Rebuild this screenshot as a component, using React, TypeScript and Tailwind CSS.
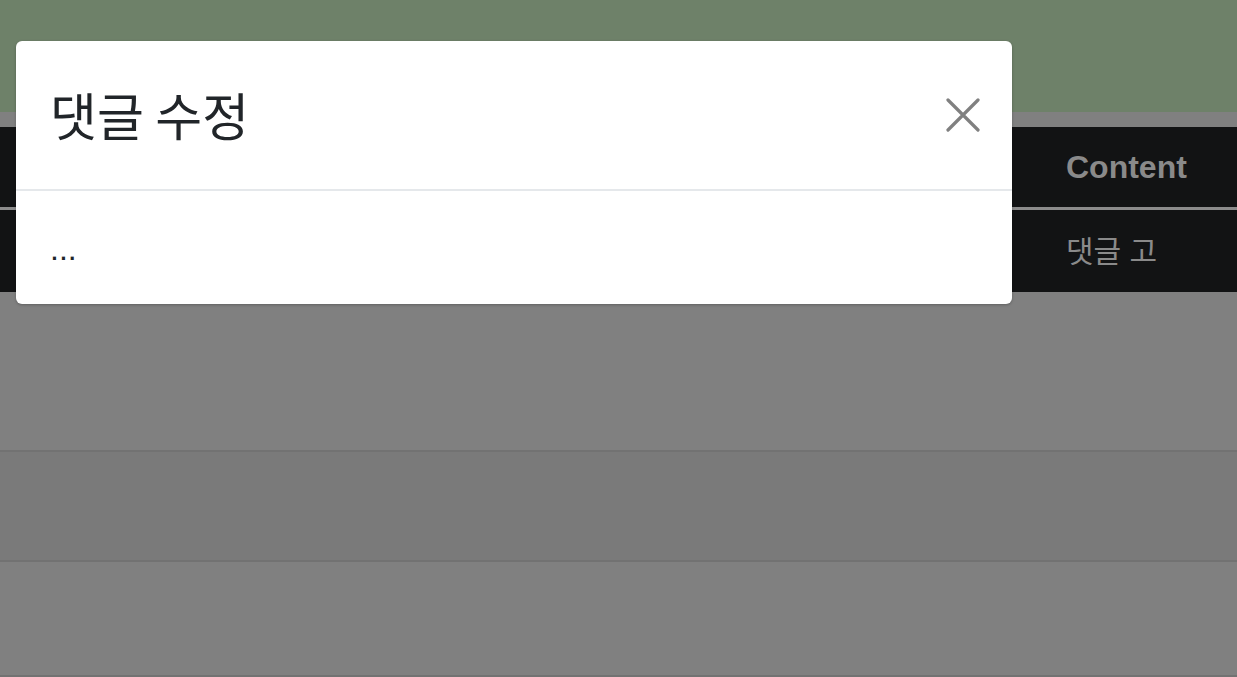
const FONT = "font-['Liberation_Sans','Noto_Sans_CJK_KR',sans-serif]";

export default function App() {
  return (
    <div className={`relative h-[677px] w-full overflow-hidden bg-[#808080] ${FONT}`}>
      {/* page behind the backdrop */}
      <div className="h-[112px] bg-[#6e8169]" />
      <div className="mt-[15px]">
        <div className="flex h-[80px] items-center bg-[#121314]">
          <div className="w-[1040px] shrink-0" />
          <div className="px-[26px] text-[32px] font-bold text-[#8a8a8a]">Content</div>
        </div>
        <div className="h-[3px] bg-[#8c8c8c]" />
        <div className="flex h-[82px] items-center bg-[#121314]">
          <div className="w-[1040px] shrink-0" />
          <div className="px-[26px] text-[30px] text-[#8a8a8a]">댓글 고</div>
        </div>
        <div className="h-[160px] border-b-2 border-[#727272]" />
        <div className="h-[110px] border-b-2 border-[#727272] bg-[#7a7a7a]" />
        <div className="h-[115px] border-b-2 border-[#727272]" />
      </div>

      {/* modal */}
      <div className="absolute left-[16px] top-[41px] w-[996px] overflow-hidden rounded-md bg-white shadow-[0_1px_3px_rgba(0,0,0,0.25)]">
        <div className="flex h-[150px] items-center justify-between border-b-2 border-[#e5e8eb] pl-[34px] pr-[32px]">
          <h4 className="mt-[-2px] font-['Noto_Sans_CJK_KR',sans-serif] text-[51px] font-normal leading-none text-[#212529]">댓글 수정</h4>
          <button className="flex h-[34px] w-[34px] items-center justify-center">
            <svg viewBox="0 0 34 34" className="h-[34px] w-[34px]" fill="none" stroke="#808080" strokeWidth="3.2" strokeLinecap="round">
              <path d="M2 2L32 32M32 2L2 32" />
            </svg>
          </button>
        </div>
        <div className="h-[113px] px-[34px] pt-[34px] text-[32px] leading-[48px] text-[#212529]">...</div>
      </div>
    </div>
  );
}
